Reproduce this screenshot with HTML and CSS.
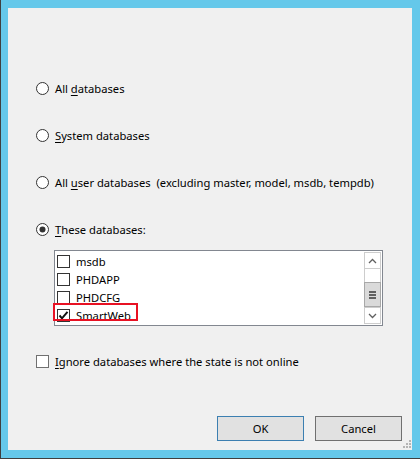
FILE: index.html
```html
<!DOCTYPE html>
<html>
<head>
<meta charset="utf-8">
<link rel="stylesheet" href="styles.css">
</head>
<body>
<div class="window">
  <div class="client">
    <div class="options">
      <div class="radio-row">
        <svg class="radio" width="13" height="13" viewBox="0 0 13 13"><circle cx="6.5" cy="6.5" r="6" fill="#fff" stroke="#333"/></svg>
        <span>All <u>d</u>atabases</span>
      </div>
      <div class="radio-row">
        <svg class="radio" width="13" height="13" viewBox="0 0 13 13"><circle cx="6.5" cy="6.5" r="6" fill="#fff" stroke="#333"/></svg>
        <span><u>S</u>ystem databases</span>
      </div>
      <div class="radio-row">
        <svg class="radio" width="13" height="13" viewBox="0 0 13 13"><circle cx="6.5" cy="6.5" r="6" fill="#fff" stroke="#333"/></svg>
        <span>All <u>u</u>ser databases&nbsp; (excluding master, model, msdb, tempdb)</span>
      </div>
      <div class="radio-row">
        <svg class="radio" width="13" height="13" viewBox="0 0 13 13"><circle cx="6.5" cy="6.5" r="6" fill="#fff" stroke="#333"/><circle cx="6.5" cy="6.5" r="3" fill="#333"/></svg>
        <span><u>T</u>hese databases:</span>
      </div>
    </div>

    <div class="listbox">
      <div class="items">
        <div class="item"><span class="cb"></span><span>msdb</span></div>
        <div class="item"><span class="cb"></span><span>PHDAPP</span></div>
        <div class="item"><span class="cb"></span><span>PHDCFG</span></div>
        <div class="item"><span class="cb"><svg width="11" height="11" viewBox="0 0 11 11"><path d="M1.5 5.5 L4 8.3 L9.5 1.8" fill="none" stroke="#111" stroke-width="2"/></svg></span><span>SmartWeb</span></div>
      </div>
      <div class="scrollbar">
        <div class="sb-btn up"><svg width="9" height="6" viewBox="0 0 9 6"><path d="M1 5 L4.5 1.5 L8 5" fill="none" stroke="#606060" stroke-width="1.3"/></svg></div>
        <div class="sb-track"></div>
        <div class="sb-thumb"><span class="grip-line"></span><span class="grip-line"></span><span class="grip-line"></span></div>
        <div class="sb-btn down"><svg width="9" height="6" viewBox="0 0 9 6"><path d="M1 1 L4.5 4.5 L8 1" fill="none" stroke="#606060" stroke-width="1.3"/></svg></div>
      </div>
      <div class="highlight"></div>
    </div>

    <div class="ignore-row">
      <span class="cb cb-light"></span>
      <span><u>I</u>gnore databases where the state is not online</span>
    </div>

    <div class="buttons">
      <div class="btn btn-default">OK</div>
      <div class="btn">Cancel</div>
    </div>

    <svg class="size-grip" width="8" height="8" viewBox="0 0 8 8">
      <rect x="6" y="0" width="2" height="2" fill="#b4b4b4"/>
      <rect x="3" y="3" width="2" height="2" fill="#b4b4b4"/>
      <rect x="6" y="3" width="2" height="2" fill="#b4b4b4"/>
      <rect x="0" y="6" width="2" height="2" fill="#b4b4b4"/>
      <rect x="3" y="6" width="2" height="2" fill="#b4b4b4"/>
      <rect x="6" y="6" width="2" height="2" fill="#b4b4b4"/>
    </svg>
  </div>
</div>
</body>
</html>
```

FILE: styles.css
```css
* { box-sizing: border-box; }
html, body { margin: 0; padding: 0; }
body {
  font-family: "Noto Sans", "Open Sans", sans-serif;
  font-size: 11.2px;
  color: #000;
  background: #65c8ea;
}
.window {
  width: 420px;
  height: 459px;
  background: #65c8ea;
  border-left: 1px solid #3f3f3f;
  border-bottom: 1px solid #3f3f3f;
  padding: 8px 8px 8px 7px;
}
.client {
  position: relative;
  height: 442px;
  background: #f0f0f0;
  padding-top: 72px;
  display: flex;
  flex-direction: column;
}
.options {
  display: flex;
  flex-direction: column;
  gap: 30px;
  padding-left: 28px;
}
.radio-row {
  height: 17px;
  display: flex;
  align-items: center;
  white-space: pre;
}
.radio {
  display: block;
  flex: none;
  margin-right: 6px;
}
u { text-underline-offset: 2px; }

.listbox {
  position: relative;
  margin-top: 12px;
  margin-left: 46px;
  width: 329px;
  height: 76px;
  border: 1px solid #828790;
  background: #fff;
  display: flex;
}
.items {
  flex: 1;
  padding-top: 1px;
}
.item {
  height: 18px;
  display: flex;
  align-items: center;
  padding-left: 2px;
}
.cb {
  width: 13px;
  height: 13px;
  flex: none;
  border: 1px solid #333;
  background: #fff;
  margin-right: 6px;
  display: flex;
  align-items: center;
  justify-content: center;
}
.cb svg { display: block; }
.cb-light { border-color: #707070; }

.scrollbar {
  width: 17px;
  margin: 1px 1px 1px 0;
  border: 1px solid #cdcdcd;
  display: flex;
  flex-direction: column;
  background: #fff;
}
.sb-btn {
  height: 16px;
  display: flex;
  align-items: center;
  justify-content: center;
  flex: none;
}
.sb-btn.up { border-bottom: 1px solid #cdcdcd; }
.sb-btn.down { border-top: 1px solid #cdcdcd; }
.sb-track { height: 13px; flex: none; }
.sb-thumb {
  height: 25px;
  flex: none;
  margin: 0 -1px;
  background: #dadada;
  border: 1px solid #a8a8a8;
  display: flex;
  flex-direction: column;
  align-items: center;
  justify-content: center;
  gap: 1px;
}
.grip-line {
  width: 7px;
  height: 2px;
  background: #606060;
}
.highlight {
  position: absolute;
  left: -2px;
  top: 52px;
  width: 85px;
  height: 18px;
  border: 2px solid #e81123;
}

.ignore-row {
  margin-top: 27px;
  height: 17px;
  padding-left: 28px;
  display: flex;
  align-items: center;
}

.buttons {
  margin-top: 46px;
  display: flex;
  justify-content: flex-end;
  gap: 11px;
  padding-right: 10px;
}
.btn {
  width: 87px;
  height: 25px;
  background: #e1e1e1;
  border: 1px solid #707070;
  display: flex;
  align-items: center;
  justify-content: center;
}
.btn-default { border-color: #3c7fb1; }

.size-grip {
  position: absolute;
  right: 1px;
  bottom: 2px;
  display: block;
}
```
